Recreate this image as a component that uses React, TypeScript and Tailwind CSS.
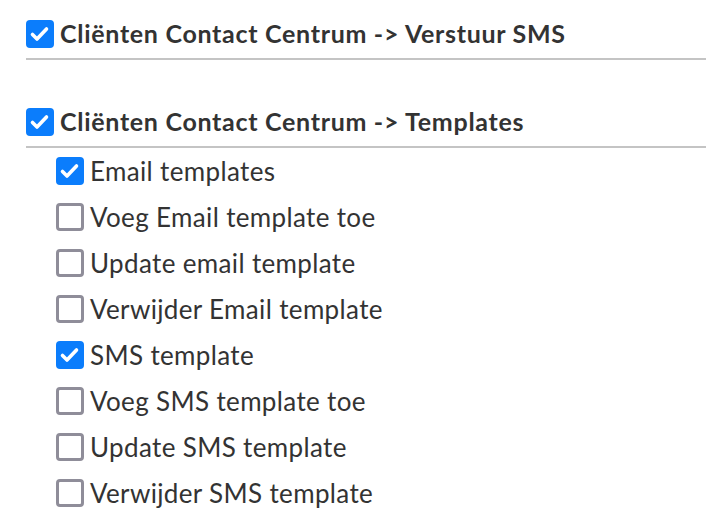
const sections = [
	{
		title: "Cliënten Contact Centrum -> Verstuur SMS",
		checked: true,
		items: [] as { label: string; checked: boolean }[],
	},
	{
		title: "Cliënten Contact Centrum -> Templates",
		checked: true,
		items: [
			{ label: "Email templates", checked: true },
			{ label: "Voeg Email template toe", checked: false },
			{ label: "Update email template", checked: false },
			{ label: "Verwijder Email template", checked: false },
			{ label: "SMS template", checked: true },
			{ label: "Voeg SMS template toe", checked: false },
			{ label: "Update SMS template", checked: false },
			{ label: "Verwijder SMS template", checked: false },
		],
	},
];

function Box({ checked }: { checked: boolean }) {
	if (checked) {
		return (
			<span className="flex h-[28px] w-[28px] shrink-0 items-center justify-center rounded-[4px] bg-[#0b7dfc]">
				<svg width="28" height="28" viewBox="0 0 28 28" fill="none">
					<path
						d="M6.5 14.5l4.5 4.5 9.5-10"
						stroke="white"
						strokeWidth="3.6"
						strokeLinecap="round"
						strokeLinejoin="round"
					/>
				</svg>
			</span>
		);
	}
	return (
		<span className="h-[28px] w-[28px] shrink-0 rounded-[4px] border-[3px] border-[#8f8d99] bg-white" />
	);
}

export default function App() {
	return (
		<div className="min-h-screen bg-white pl-[26px] pt-[20px] text-[#333] font-['Lato',sans-serif]">
			{sections.map((section, index) => (
				<div key={index} className={index > 0 ? "mt-[48px]" : ""}>
					<div className="flex h-[28px] items-center gap-[6px] text-[25px] font-bold tracking-[0.7px]">
						<Box checked={section.checked} />
						<span>{section.title}</span>
					</div>
					<div className="mt-[10px] border-b-2 border-[#c4c4c4]" />
					{section.items.map((item) => (
						<div key={item.label} className="flex h-[46px] items-center gap-[6px] pl-[30px] text-[26px] tracking-[0.35px]">
							<Box checked={item.checked} />
							<span>{item.label}</span>
						</div>
					))}
				</div>
			))}
		</div>
	);
}
